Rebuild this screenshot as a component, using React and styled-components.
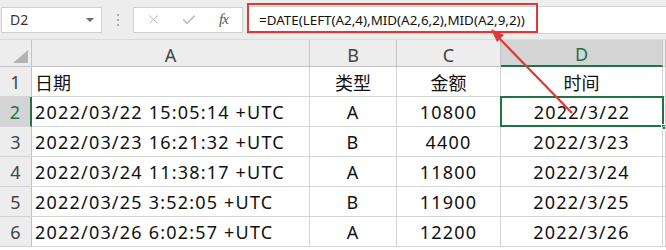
import React from 'react';
import styled, { createGlobalStyle, css } from 'styled-components';
import { X, Check } from 'lucide-react';

const GREEN = '#217346';
const RED = '#dc3a37';

const GlobalStyle = createGlobalStyle`
  html, body {
    margin: 0;
    padding: 0;
    background: #fff;
  }
  body {
    font-family: 'Noto Sans', 'Noto Sans CJK SC', sans-serif;
    width: 666px;
    height: 250px;
    overflow: hidden;
  }
`;

const Page = styled.div`
  position: relative;
  width: 666px;
  height: 250px;
  overflow: hidden;
`;

const Toolbar = styled.div`
  display: flex;
  align-items: center;
  height: 40px;
  padding: 0 0 0 1px;
  box-sizing: border-box;
  background: #ededed;
  border-bottom: 1px solid #dadada;
`;

const NameBox = styled.div`
  display: flex;
  align-items: center;
  justify-content: space-between;
  box-sizing: border-box;
  width: 101px;
  height: 26px;
  padding: 0 7px 0 8px;
  background: #fff;
  border: 1px solid #d0d0d0;
  font-size: 14px;
  color: #333;
`;

const Caret = styled.span`
  width: 0;
  height: 0;
  border-left: 4px solid transparent;
  border-right: 4px solid transparent;
  border-top: 4px solid #6a6a6a;
`;

const Grip = styled.div`
  display: flex;
  flex-direction: column;
  gap: 3px;
  margin: 0 14px 0 15px;

  span {
    width: 2px;
    height: 2px;
    background: #a8a8a8;
  }
`;

const ButtonBox = styled.div`
  display: flex;
  align-items: center;
  box-sizing: border-box;
  width: 110px;
  height: 26px;
  padding: 0 8px 0 12px;
  background: #fff;
  border: 1px solid #d0d0d0;
  color: #bdbdbd;
  gap: 20px;
`;

const Fx = styled.span`
  margin-left: 2px;
  font-family: 'Liberation Serif', serif;
  font-style: italic;
  font-size: 15px;
  color: #555;
  letter-spacing: -1px;
`;

const FormulaField = styled.div`
  position: relative;
  flex: 1;
  height: 26px;
  margin-left: 4px;
  display: flex;
  align-items: center;
  padding-left: 11px;
  background: #fff;
  border: 1px solid #d0d0d0;
  border-right: none;
  font-size: 13.4px;
  color: #111;
`;

const Highlight = styled.div`
  position: absolute;
  left: -1px;
  top: -4px;
  width: 291px;
  height: 30px;
  box-sizing: border-box;
  border: 2px solid ${RED};
  pointer-events: none;
`;

const Sheet = styled.div`
  display: grid;
  grid-template-columns: 32px 278px 87px 104px 162px 1fr;
  grid-template-rows: 27px repeat(6, 30px);
`;

const headCss = css`
  display: flex;
  align-items: center;
  justify-content: center;
  box-sizing: border-box;
  background: ${(p) => (p.$active ? '#d4d4d4' : '#ededed')};
  color: ${(p) => (p.$active ? GREEN : '#444')};
  font-size: 18px;
`;

const Corner = styled.div`
  position: relative;
  box-sizing: border-box;
  background: #ededed;
  border-right: 1px solid #c4c4c4;
  border-bottom: 1px solid #c4c4c4;

  &::after {
    content: '';
    position: absolute;
    right: 3px;
    bottom: 3px;
    width: 0;
    height: 0;
    border-left: 15px solid transparent;
    border-bottom: 13px solid #b4b4b4;
  }
`;

const ColHead = styled.div`
  ${headCss};
  padding-top: 3px;
  border-right: 1px solid #c4c4c4;
  border-bottom: ${(p) => (p.$active ? `2px solid ${GREEN}` : '1px solid #c4c4c4')};
`;

const RowHead = styled.div`
  ${headCss};
  border-bottom: 1px solid #d4d4d4;
  border-right: ${(p) => (p.$active ? `2px solid ${GREEN}` : '1px solid #c4c4c4')};
`;

const Cell = styled.div`
  position: relative;
  display: flex;
  align-items: center;
  justify-content: ${(p) => (p.$left ? 'flex-start' : 'center')};
  box-sizing: border-box;
  padding-left: ${(p) => (p.$left ? '3px' : '0')};
  border-right: 1px solid #d4d4d4;
  border-bottom: 1px solid #d4d4d4;
  font-size: 18px;
  letter-spacing: ${(p) => (p.$title ? '0' : '1.2px')};
  color: #111;
  white-space: nowrap;

  ${(p) =>
    p.$selected &&
    css`
      border: none;
      box-shadow: inset 0 0 0 2px ${GREEN};
      margin: -1px 0 0 -1px;
      width: calc(100% + 2px);
      height: 31px;

      &::after {
        content: '';
        position: absolute;
        right: -3px;
        bottom: -3px;
        width: 6px;
        height: 6px;
        background: ${GREEN};
        border: 1px solid #fff;
        box-sizing: border-box;
      }
    `}
`;

const Arrow = styled.svg`
  position: absolute;
  left: 0;
  top: 0;
  pointer-events: none;
`;

const columns = ['A', 'B', 'C', 'D', ''];

const rows = [
  ['日期', '类型', '金额', '时间'],
  ['2022/03/22 15:05:14 +UTC', 'A', '10800', '2022/3/22'],
  ['2022/03/23 16:21:32 +UTC', 'B', '4400', '2022/3/23'],
  ['2022/03/24 11:38:17 +UTC', 'A', '11800', '2022/3/24'],
  ['2022/03/25 3:52:05 +UTC', 'B', '11900', '2022/3/25'],
  ['2022/03/26 6:02:57 +UTC', 'A', '12200', '2022/3/26'],
];

export default function App() {
  return (
    <Page>
      <GlobalStyle />
      <Toolbar>
        <NameBox>
          D2
          <Caret />
        </NameBox>
        <Grip>
          <span />
          <span />
          <span />
        </Grip>
        <ButtonBox>
          <X size={15} strokeWidth={1.6} />
          <Check size={16} strokeWidth={2.4} />
          <Fx>fx</Fx>
        </ButtonBox>
        <FormulaField>
          =DATE(LEFT(A2,4),MID(A2,6,2),MID(A2,9,2))
          <Highlight />
        </FormulaField>
      </Toolbar>
      <Sheet>
        <Corner />
        {columns.map((c) => (
          <ColHead key={c || 'x'} $active={c === 'D'}>
            {c}
          </ColHead>
        ))}
        {rows.map((r, i) => (
          <React.Fragment key={i}>
            <RowHead $active={i === 1}>{i + 1}</RowHead>
            {r.map((v, j) => (
              <Cell
                key={j}
                $left={j === 0}
                $title={i === 0}
                $selected={i === 1 && j === 3}
              >
                {v}
              </Cell>
            ))}
            <Cell />
          </React.Fragment>
        ))}
      </Sheet>
      <Arrow width="666" height="250" viewBox="0 0 666 250">
        <line x1="572" y1="113" x2="499" y2="38" stroke={RED} strokeWidth="2.2" />
        <polygon points="491,29 504,35 497,42" fill={RED} />
      </Arrow>
    </Page>
  );
}
